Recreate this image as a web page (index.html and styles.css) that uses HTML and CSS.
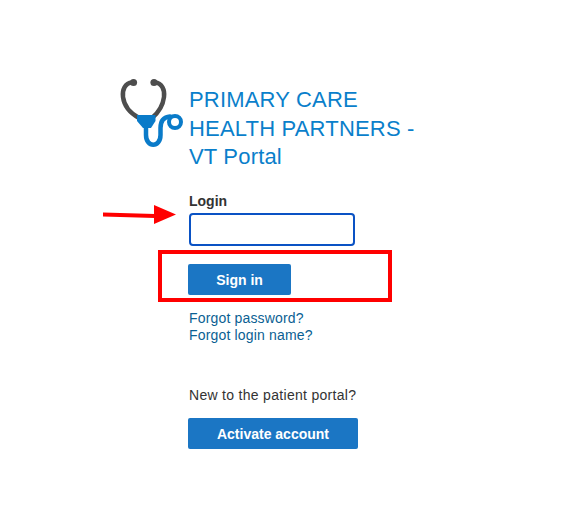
FILE: index.html
```html
<!DOCTYPE html>
<html lang="en">
<head>
<meta charset="utf-8">
<title>Primary Care Health Partners - VT Portal</title>
<link rel="stylesheet" href="styles.css">
</head>
<body>
<main class="portal">
  <header class="brand">
    <svg class="logo" viewBox="0 0 80 80" width="80" height="80" aria-hidden="true">
      <path class="tube-gray" d="M22 10.500 C15 11 12 18 13 25 C14 33 20 41 29 46"/>
      <path class="tube-gray" d="M45 10.500 C52 11 55 18 54 25 C53 33 48 41 42 46"/>
      <circle class="tip" cx="23.500" cy="10.500" r="3.600"/>
      <circle class="tip" cx="44" cy="10.500" r="3.600"/>
      <path class="chest" d="M27 43 H45.500 V49 L41 56 H33 L27 49 Z"/>
      <path class="tube-blue" d="M36 54 V63 C36 76 50.500 76 50.500 63 V56 C50.500 49 54 45 60 44.500"/>
      <circle class="ring" cx="65" cy="50" r="6"/>
    </svg>
    <h1 class="title">PRIMARY CARE HEALTH PARTNERS - VT Portal</h1>
  </header>
  <form class="form">
    <label class="label" for="login">Login</label>
    <input class="input" id="login" type="text">
    <button class="btn btn-signin" type="button">Sign in</button>
    <div class="links">
      <a href="#">Forgot password?</a>
      <a href="#">Forgot login name?</a>
    </div>
    <p class="new">New to the patient portal?</p>
    <button class="btn btn-activate" type="button">Activate account</button>
  </form>
</main>
<svg class="arrow" viewBox="0 0 76 24" width="76" height="24" aria-hidden="true">
  <path d="M0 9.500 L52 11 L52 15 L0 13.500 Z" fill="#f00"/>
  <path d="M51 2 L73 11.500 L51 21 Z" fill="#f00"/>
</svg>
<div class="highlight"></div>
</body>
</html>
```
FILE: styles.css
```css
html, body { margin: 0; padding: 0; background: #fff; }
body {
  width: 579px;
  height: 532px;
  position: relative;
  overflow: hidden;
  font-family: "Liberation Sans", Arial, sans-serif;
  color: #333;
}
.portal { padding: 72px 0 0 110px; }
.brand { display: flex; align-items: flex-start; }
.logo { flex: none; display: block; margin-right: -1px; }
.tube-gray { fill: none; stroke: #4d4d4d; stroke-width: 4.500; stroke-linecap: round; }
.tip { fill: #4d4d4d; }
.chest { fill: #0a7bc9; }
.tube-blue { fill: none; stroke: #0a7bc9; stroke-width: 4.500; stroke-linecap: round; }
.ring { fill: #fff; stroke: #0a7bc9; stroke-width: 4; }
.title {
  margin: 14px 0 0 0;
  width: 240px;
  font-size: 22px;
  font-weight: 400;
  line-height: 28.500px;
  letter-spacing: 0.18px;
  color: #0a7fcb;
}
.form { display: flex; flex-direction: column; align-items: flex-start; margin: 21.500px 0 0 79px; }
.label { font-size: 14px; font-weight: 700; line-height: 16px; color: #333; }
.input {
  box-sizing: border-box;
  width: 166px;
  height: 33px;
  margin: 4px 0 0 0;
  border: 2px solid #0a52c4;
  border-radius: 4px;
  background: #fff;
  outline: none;
}
.btn {
  box-sizing: border-box;
  border: 0;
  border-radius: 2px;
  background: #1b76c4;
  color: #fff;
  font-family: inherit;
  font-size: 14px;
  font-weight: 700;
  height: 31px;
  padding: 0;
}
.btn-signin { width: 103px; margin-top: 18px; margin-left: -1px; }
.links { display: flex; flex-direction: column; margin: 15px 0 0 0; font-size: 14px; line-height: 17px; letter-spacing: 0.17px; }
.links a { color: #0b5f93; text-decoration: none; }
.new { margin: 43px 0 0 0; font-size: 14px; line-height: 17px; letter-spacing: 0.3px; color: #333; }
.btn-activate { width: 170px; margin-top: 14px; margin-left: -1px; }
.arrow { position: absolute; left: 103px; top: 203px; }
.highlight {
  position: absolute;
  left: 158px;
  top: 250px;
  width: 234px;
  height: 52px;
  box-sizing: border-box;
  border: 4px solid #f00;
}
```
